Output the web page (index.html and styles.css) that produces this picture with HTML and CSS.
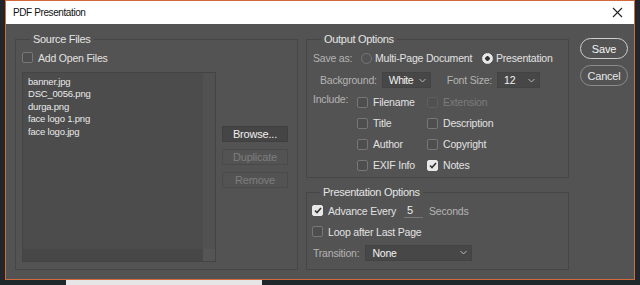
FILE: index.html
```html
<!DOCTYPE html>
<html lang="en">
<head>
  <meta charset="UTF-8" />
  <title>PDF Presentation</title>
  <link rel="stylesheet" href="styles.css">
</head>
<body>
  <div class="window">
    <div class="titlebar">
      <span>PDF Presentation</span>
      <svg class="close" width="11" height="11" viewBox="0 0 11 11"><path d="M1 1L10 10M10 1L1 10" stroke="#222" stroke-width="1.1"/></svg>
    </div>
    <div class="content">
      <fieldset class="group source">
        <legend>Source Files</legend>
        <label class="check row-open"><span class="box"></span>Add Open Files</label>
        <div class="source-main">
          <div class="filelist">
            <div class="files">
              <div>banner.jpg</div>
              <div>DSC_0056.png</div>
              <div>durga.png</div>
              <div>face logo 1.png</div>
              <div>face logo.jpg</div>
            </div>
            <div class="vscroll"></div>
            <div class="hscroll"></div>
            <div class="corner"></div>
          </div>
          <div class="side-buttons">
            <div class="btn">Browse...</div>
            <div class="btn disabled">Duplicate</div>
            <div class="btn disabled">Remove</div>
          </div>
        </div>
      </fieldset>

      <div class="options">
        <fieldset class="group output">
          <legend>Output Options</legend>
          <div class="row saveas">
            <span class="lbl">Save as:</span>
            <label class="radio multi"><span class="dot"></span>Multi-Page Document</label>
            <label class="radio on"><span class="dot"></span>Presentation</label>
          </div>
          <div class="row bgrow">
            <span class="lbl">Background:</span>
            <div class="select w-bg">White<svg width="7" height="5" viewBox="0 0 7 5"><path d="M0.5 1L3.5 4L6.5 1" stroke="#bbb" fill="none"/></svg></div>
            <span class="lbl fs">Font Size:</span>
            <div class="select w-fs">12<svg width="7" height="5" viewBox="0 0 7 5"><path d="M0.5 1L3.5 4L6.5 1" stroke="#bbb" fill="none"/></svg></div>
          </div>
          <div class="include">
            <span class="lbl">Include:</span>
            <div class="checks">
              <label class="check"><span class="box"></span>Filename</label>
              <label class="check disabled"><span class="box"></span>Extension</label>
              <label class="check"><span class="box"></span>Title</label>
              <label class="check"><span class="box"></span>Description</label>
              <label class="check"><span class="box"></span>Author</label>
              <label class="check"><span class="box"></span>Copyright</label>
              <label class="check"><span class="box"></span>EXIF Info</label>
              <label class="check on"><span class="box"><svg width="8" height="7" viewBox="0 0 8 7"><path d="M1 3.5L3 5.5L7 1" stroke="#333" stroke-width="1.6" fill="none"/></svg></span>Notes</label>
            </div>
          </div>
        </fieldset>

        <fieldset class="group present">
          <legend>Presentation Options</legend>
          <div class="row">
            <label class="check on"><span class="box"><svg width="8" height="7" viewBox="0 0 8 7"><path d="M1 3.5L3 5.5L7 1" stroke="#333" stroke-width="1.6" fill="none"/></svg></span>Advance Every</label>
            <span class="num">5</span>
            <span class="lbl">Seconds</span>
          </div>
          <div class="row">
            <label class="check"><span class="box"></span>Loop after Last Page</label>
          </div>
          <div class="row">
            <span class="lbl">Transition:</span>
            <div class="select w-tr">None<svg width="7" height="5" viewBox="0 0 7 5"><path d="M0.5 1L3.5 4L6.5 1" stroke="#bbb" fill="none"/></svg></div>
          </div>
        </fieldset>
      </div>

      <div class="actions">
        <div class="pill primary">Save</div>
        <div class="pill">Cancel</div>
      </div>
    </div>
  </div>
  <div class="strip"></div>
</body>
</html>
```

FILE: styles.css
```css
body {
  margin: 0;
  background: #20272a;
  font-family: 'Liberation Sans', Arial, sans-serif;
  font-size: 10.5px;
  letter-spacing: -0.2px;
  color: #dedede;
  white-space: nowrap;
}
.window {
  margin-left: 5px;
  width: 630px;
  height: 280px;
  box-sizing: border-box;
  border: 1px solid #d36a3c;
  background: #535353;
  display: flex;
  flex-direction: column;
}
.titlebar {
  height: 23px;
  background: #fff;
  color: #111;
  font-size: 10px;
  letter-spacing: -0.4px;
  display: flex;
  align-items: center;
  justify-content: space-between;
  padding: 0 11px 0 7px;
}
.content {
  display: flex;
  padding: 8px 0 0 9px;
}
.content > * { flex: none; }
.group {
  margin: 0;
  min-width: 0;
  padding: 0 6px;
  border: 1px solid #464646;
  box-sizing: border-box;
  overflow: hidden;
}
.group legend {
  margin-left: 8px;
  padding: 0 3px;
  line-height: 14px;
  font-size: 11px;
  letter-spacing: -0.3px;
  color: #e4e4e4;
}
.source {
  width: 283px;
  height: 238px;
}
.check {
  display: flex;
  align-items: center;
  color: #e2e2e2;
}
.check .box {
  flex: none;
  width: 9px;
  height: 9px;
  border: 1px solid #777;
  border-radius: 2px;
  background: #4e4e4e;
  margin-right: 5px;
  display: flex;
  align-items: center;
  justify-content: center;
}
.check.on .box {
  background: #e8e8e8;
  border-color: #e8e8e8;
}
.check.disabled { color: #7c7c7c; }
.check.disabled .box { border-color: #5e5e5e; background: #515151; }
.row-open {
  margin-top: 5px;
  height: 13px;
}
.source-main {
  display: flex;
  margin-top: 8px;
}
.filelist {
  width: 194px;
  height: 190px;
  box-sizing: border-box;
  border: 1px solid #444;
  background: #4c4c4c;
  display: grid;
  grid-template-columns: 1fr 12px;
  grid-template-rows: 1fr 12px;
}
.files {
  padding: 3px 0 0 5px;
  font-size: 9.5px;
  line-height: 12.4px;
  color: #eaeaea;
  letter-spacing: -0.2px;
}
.vscroll { background: #515151; }
.hscroll { background: #474747; }
.corner { background: #555; }
.side-buttons {
  display: flex;
  flex-direction: column;
  gap: 7px;
  margin: 54px 0 0 6px;
}
.btn {
  width: 66px;
  height: 16px;
  box-sizing: border-box;
  border: 1px solid #3f3f3f;
  background: #454545;
  color: #f0f0f0;
  font-size: 11px;
  display: flex;
  align-items: center;
  justify-content: center;
}
.btn.disabled {
  background: #535353;
  border-color: #4a4a4a;
  color: #7e7e7e;
}
.options {
  display: flex;
  flex-direction: column;
  gap: 7px;
  margin-left: 8px;
  width: 263px;
}
.output {
  width: 263px;
  height: 146px;
}
.row {
  display: flex;
  align-items: center;
}
.lbl { color: #b4b4b4; }
.saveas {
  margin-top: 5px;
  height: 14px;
}
.saveas .lbl { width: 48px; flex: none; }
.radio {
  display: flex;
  align-items: center;
  color: #e2e2e2;
  flex: none;
}
.radio.multi { width: 121px; }
.radio .dot {
  width: 9px;
  height: 9px;
  border: 1px solid #777;
  border-radius: 50%;
  margin-right: 3px;
  box-sizing: content-box;
}
.radio.on .dot {
  background: radial-gradient(circle, #333 0 2px, #e8e8e8 2.5px);
  border-color: #e8e8e8;
}
.bgrow {
  margin-top: 7px;
  padding-left: 7px;
}
.bgrow .lbl { margin-right: 5px; }
.bgrow .fs { margin-left: 16px; }
.select {
  flex: none;
  height: 16px;
  box-sizing: border-box;
  border: 1px solid #434343;
  background: #474747;
  color: #f2f2f2;
  font-size: 10.5px;
  display: flex;
  align-items: center;
  justify-content: space-between;
  padding: 0 4px 0 6px;
}
.w-bg { width: 49px; letter-spacing: -0.5px; }
.w-fs { width: 43px; }
.w-tr { width: 107px; margin-left: 6px; }
.include {
  display: flex;
  margin-top: 7px;
}
.include .lbl {
  width: 44px;
  margin-top: -2px;
}
.checks {
  display: grid;
  grid-template-columns: 70px 100px;
  grid-auto-rows: 21px;
}
.checks .check { align-items: center; height: 14px; }
.present {
  width: 263px;
  height: 85px;
  padding-left: 5px;
}
.present .row { height: 21px; }
.present .row:first-of-type { margin-top: 1px; }
.num {
  width: 19px;
  margin-left: 8px;
  margin-right: 6px;
  border-bottom: 1px solid #777;
  padding: 0 0 1px 3px;
  box-sizing: border-box;
  color: #eee;
  font-size: 11px;
}
.present .row:last-child .lbl { margin-left: 1px; }
.actions {
  display: flex;
  flex-direction: column;
  gap: 6px;
  margin: 6px 0 0 11px;
}
.pill {
  width: 48px;
  height: 21px;
  box-sizing: border-box;
  border: 1px solid #8c8c8c;
  border-radius: 11px;
  color: #e8e8e8;
  font-size: 11px;
  display: flex;
  align-items: center;
  justify-content: center;
}
.pill.primary {
  border: 1.5px solid #cfcfcf;
  color: #f4f4f4;
}
.strip {
  margin-left: 66px;
  width: 196px;
  height: 5px;
  background: #e6e6e6;
}
```
